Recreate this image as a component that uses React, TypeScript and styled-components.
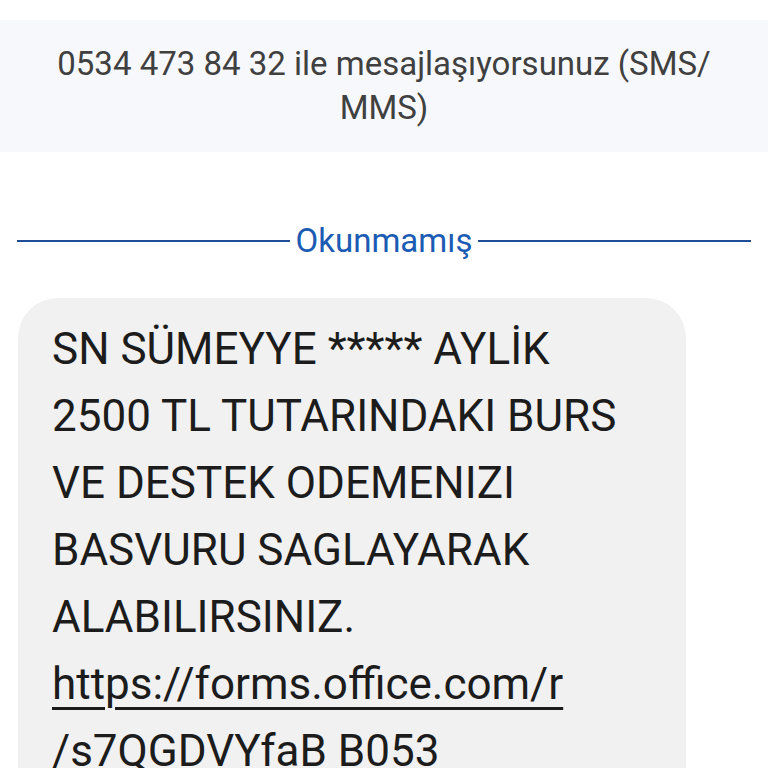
import React from 'react'
import styled, { createGlobalStyle } from 'styled-components'

const GlobalStyle = createGlobalStyle`
  body {
    margin: 0;
    background: #ffffff;
    font-family: Roboto, 'Noto Sans', sans-serif;
  }
`

const Screen = styled.div`
  width: 768px;
  padding-top: 20px;
`

const Banner = styled.div`
  background: #f7f8fb;
  padding: 22px 40px;
  text-align: center;
  font-size: 33px;
  line-height: 44px;
  color: #404040;
`

const Divider = styled.div`
  display: flex;
  align-items: center;
  gap: 6px;
  margin: 69px 17px 0;
  height: 40px;
`

const Rule = styled.div`
  flex: 1;
  height: 2px;
  background: #1f4e96;
`

const DividerLabel = styled.span`
  font-size: 33px;
  line-height: 40px;
  color: #1b5bb3;
`

const Thread = styled.div`
  padding: 37px 82px 0 18px;
`

const Bubble = styled.div`
  background: #f1f1f1;
  border-radius: 40px;
  padding: 18px 34px 40px;
  font-size: 44px;
  line-height: 67px;
  color: #1c1c1c;
  min-height: 600px;
`

const Link = styled.a`
  color: #1c1c1c;
  text-decoration: underline;
  text-decoration-thickness: 3px;
  text-underline-offset: 8px;
`

export default function App() {
  return (
    <>
      <GlobalStyle />
      <Screen>
        <Banner>0534 473 84 32 ile mesajlaşıyorsunuz (SMS/ MMS)</Banner>
        <Divider>
          <Rule />
          <DividerLabel>Okunmamış</DividerLabel>
          <Rule />
        </Divider>
        <Thread>
          <Bubble>
            SN SÜMEYYE ***** AYLİK 2500 TL TUTARINDAKI BURS VE DESTEK ODEMENIZI BASVURU SAGLAYARAK
            ALABILIRSINIZ.{' '}
            <Link href="#">
              https://forms.office.com/r<wbr />/s7QGDVYfaB
            </Link>{' '}
            B053
          </Bubble>
        </Thread>
      </Screen>
    </>
  )
}
